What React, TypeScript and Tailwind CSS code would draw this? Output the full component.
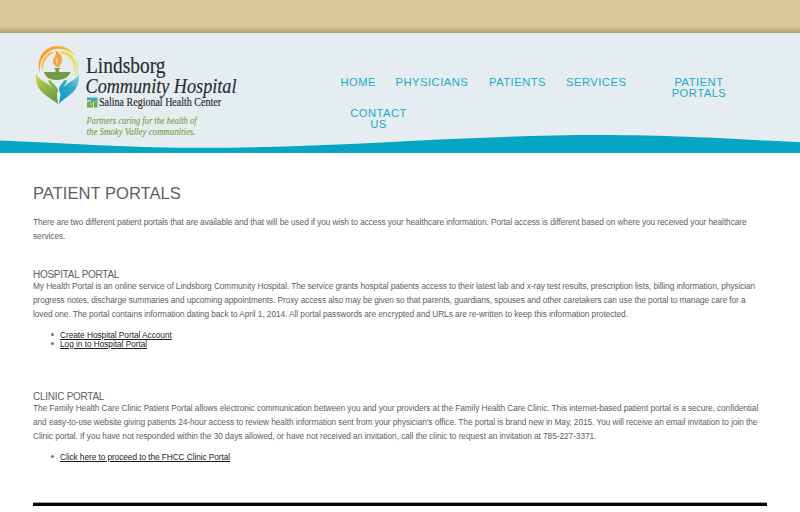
import type { ReactNode } from "react";

function Logo() {
  return (
    <svg width="210" height="96" viewBox="34 44 210 96" className="block">
      <defs>
        <linearGradient id="ring" x1="0" y1="0" x2="1" y2="0.3">
          <stop offset="0" stopColor="#f39a35" />
          <stop offset="0.55" stopColor="#f6ab3c" />
          <stop offset="1" stopColor="#ead955" />
        </linearGradient>
        <linearGradient id="leftHand" x1="0" y1="0" x2="0.4" y2="1">
          <stop offset="0" stopColor="#d3da52" />
          <stop offset="0.45" stopColor="#97bd47" />
          <stop offset="1" stopColor="#6f9f43" />
        </linearGradient>
        <linearGradient id="rightHand" x1="1" y1="0" x2="0.4" y2="1">
          <stop offset="0" stopColor="#a5d0e3" />
          <stop offset="0.45" stopColor="#3cabc9" />
          <stop offset="1" stopColor="#0b9dc2" />
        </linearGradient>
      </defs>
      <path d="M40 73C36 62 41 51 50 47.500C61 43.500 71 48 76 57C69 49.500 60 47 52 50C43 54 39 63 40 73Z" fill="url(#ring)" />
      <path d="M42.500 72C40 64 43 55 52 51.500L54 52.500C46 56 42.500 64 42.500 72Z" fill="#f5b74f" />
      <path d="M60.500 51C73 51 79 63 73.500 74C75.500 63 71 55 60.500 53.500Z" fill="#eadb4b" />
      <path d="M75 57C79 63 79 71 74.500 77C77 69 77 63 75 57Z" fill="#d5e27c" />
      <path d="M55 50C61.500 54 64 59 61 63.500C60 65 60 66 58.500 67.500C53 65 51.500 61 54.500 57.500C56 55 56.500 53 55 50Z" fill="#f5a33c" />
      <path d="M57 58C58.500 60 57 62 58 65C55 63 55 60.500 57 58Z" fill="#f8dca6" />
      <path d="M53.500 68H60.500L59 69.500V72H70.500C69 77 64 80 57 80C50 80 45 77 44 72H55.500V69.500Z" fill="#719b44" />
      <path d="M36.200 73.500C38.500 80 45 81 49 85L52 87.500L48.500 82.500C47.500 79.500 50 79.500 51.500 81.500L56.500 87C59 90 57.500 92 57 95L58 104.500C53 99 46 97 41 91C36.500 86 35.500 79 36.200 73.500Z" fill="url(#leftHand)" />
      <path d="M78.700 73.500C76.500 80 70 81 66 85L63 87.500L66.500 82.500C67.500 79.500 65 79.500 63.500 81.500L60 86C57.500 90 60.500 92 60.500 95L58.800 104.500C62 99 69 97 74 91C78.500 86 79.500 79 78.700 73.500Z" fill="url(#rightHand)" />
      <g fontFamily="'Liberation Serif', serif" fill="#2d2b30" stroke="#2d2b30" strokeWidth="0.2">
        <text x="86" y="72.800" fontSize="23.500" textLength="79.500" lengthAdjust="spacingAndGlyphs">Lindsborg</text>
        <text x="85.500" y="92.500" fontSize="22" fontStyle="italic" textLength="151" lengthAdjust="spacingAndGlyphs">Community Hospital</text>
        <text x="99" y="106.300" fontSize="12.500" textLength="122" lengthAdjust="spacingAndGlyphs">Salina Regional Health Center</text>
      </g>
      <path d="M87 97.500H97.500V101.500H87Z" fill="#36abc8" />
      <path d="M87 101.500H91V99.500H93V101.500H97.500V107.500H87Z" fill="#73a64b" />
      <path d="M87 101.500L91 100.500M91 103V105.500M93.500 102V107.500" stroke="#e6edf1" strokeWidth="0.9" fill="none" />
      <g fontFamily="'Liberation Serif', serif" fontStyle="italic" fontSize="11" fill="#77a34d" stroke="#77a34d" strokeWidth="0.15">
        <text x="86.500" y="123.600" textLength="110" lengthAdjust="spacingAndGlyphs">Partners caring for the health of</text>
        <text x="86.500" y="135" textLength="109" lengthAdjust="spacingAndGlyphs">the Smoky Valley communities.</text>
      </g>
    </svg>
  );
}

function Line({ spacing, children }: { spacing: string; children: ReactNode }) {
  return <span className={`block whitespace-nowrap ${spacing}`}>{children}</span>;
}

function Bullet({ spacing, children }: { spacing: string; children: ReactNode }) {
  return (
    <li className="flex h-[9px] items-center">
      <span className="mr-[6px] ml-[17.5px] size-[3.5px] rounded-full bg-[#707070]" />
      <a href="#" className={`whitespace-nowrap text-[#1c1c1c] underline ${spacing}`}>{children}</a>
    </li>
  );
}

export default function App() {
  return (
    <div className="h-[512px] w-[800px] overflow-hidden bg-white font-['Liberation_Sans',Arial,sans-serif] text-[8.3px] text-[#606060]">
      <div className="flex h-[33px] flex-col justify-end bg-[#d7c698]">
        <div className="h-[6px] bg-linear-to-b from-[#d7c698] to-[#ad9e78]" />
      </div>
      <header className="relative h-[120px] bg-[#e6edf1]">
        <svg className="absolute inset-x-0 bottom-0" width="800" height="20" viewBox="0 133 800 20">
          <path d="M0 140.500C55 142.500 130 147.800 190 147.800C330 148.500 460 135 600 135C680 135 740 139.500 800 142.300V153H0Z" fill="#06a5c4" />
        </svg>
        <div className="relative flex pt-[11px] pl-[34px]">
          <Logo />
          <nav className="w-[500px] pt-[33px] pl-[96.5px] text-[11.2px] leading-[10.7px] tracking-[0.5px] text-[#19aac6]">
            <div className="flex h-[31px] whitespace-nowrap">
              <a className="w-[55px]" href="#">HOME</a>
              <a className="w-[93.5px]" href="#">PHYSICIANS</a>
              <a className="w-[77px]" href="#">PATIENTS</a>
              <a className="w-[94px]" href="#">SERVICES</a>
              <a className="w-[78px] text-center" href="#">PATIENT<br />PORTALS</a>
            </div>
            <a className="block w-[76px] text-center" href="#">CONTACT<br />US</a>
          </nav>
        </div>
      </header>
      <main className="px-[33px] pt-[31px] leading-[14px]">
        <h1 className="h-[31px] text-[16.6px] leading-[20px]">PATIENT PORTALS</h1>
        <p className="h-[54px]">
          <Line spacing="tracking-[-0.069px]">There are two different patient portals that are available and that will be used if you wish to access your healthcare information. Portal access is different based on where you received your healthcare</Line>
          <Line spacing="tracking-[-0.04px]">services.</Line>
        </p>
        <h2 className="h-[10px] text-[10px] leading-[11px] tracking-[-0.27px]">HOSPITAL PORTAL</h2>
        <p className="h-[51px]">
          <Line spacing="tracking-[-0.070px]">My Health Portal is an online service of Lindsborg Community Hospital. The service grants hospital patients access to their latest lab and x-ray test results, prescription lists, billing information, physician</Line>
          <Line spacing="tracking-[-0.078px]">progress notes, discharge summaries and upcoming appointments. Proxy access also may be given so that parents, guardians, spouses and other caretakers can use the portal to manage care for a</Line>
          <Line spacing="tracking-[-0.066px]">loved one. The portal contains information dating back to April 1, 2014. All portal passwords are encrypted and URLs are re-written to keep this information protected.</Line>
        </p>
        <ul className="h-[61px]">
          <Bullet spacing="tracking-[-0.04px]">Create Hospital Portal Account</Bullet>
          <Bullet spacing="tracking-[-0.04px]">Log in to Hospital Portal</Bullet>
        </ul>
        <h2 className="h-[10px] text-[10px] leading-[11px] tracking-[-0.27px]">CLINIC PORTAL</h2>
        <p className="h-[51px]">
          <Line spacing="tracking-[-0.062px]">The Family Health Care Clinic Patient Portal allows electronic communication between you and your providers at the Family Health Care Clinic. This internet-based patient portal is a secure, confidential</Line>
          <Line spacing="tracking-[-0.060px]">and easy-to-use website giving patients 24-hour access to review health information sent from your physician's office. The portal is brand new in May, 2015. You will receive an email invitation to join the</Line>
          <Line spacing="tracking-[-0.056px]">Clinic portal. If you have not responded within the 30 days allowed, or have not received an invitation, call the clinic to request an invitation at 785-227-3371.</Line>
        </p>
        <ul className="h-[50px]">
          <Bullet spacing="tracking-[-0.07px]">Click here to proceed to the FHCC Clinic Portal</Bullet>
        </ul>
        <div className="h-[4px] w-[734px] border-t border-[#a0a8a4] bg-black" />
      </main>
    </div>
  );
}
